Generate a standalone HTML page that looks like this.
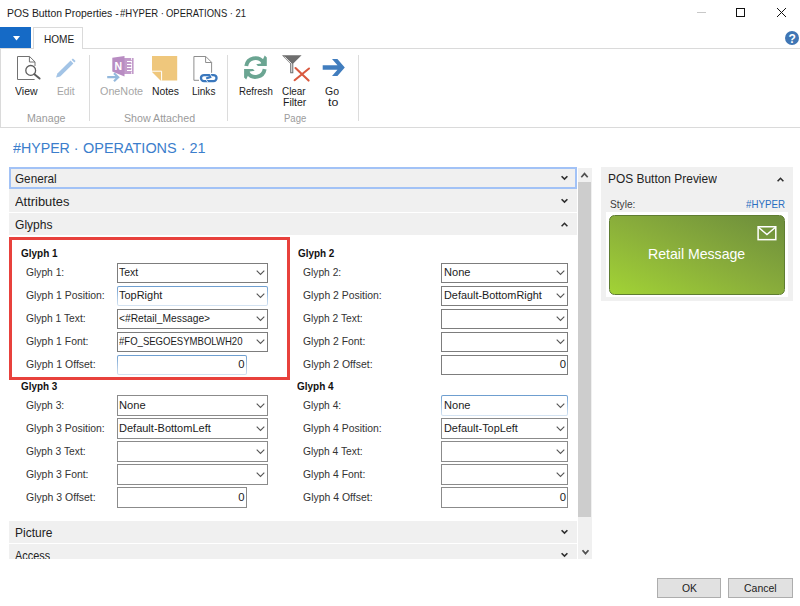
<!DOCTYPE html>
<html><head><meta charset="utf-8"><title>POS Button Properties</title>
<style>
html,body{margin:0;padding:0;background:#fff;}
body{width:800px;height:606px;position:relative;overflow:hidden;font-family:"Liberation Sans",sans-serif;font-size:11.3px;color:#000;}
.a{position:absolute;}
.t{position:absolute;white-space:nowrap;line-height:16px;height:16px;transform-origin:0 0;}
.in{position:absolute;box-sizing:border-box;border:1px solid #7d7d7d;background:#fff;height:20px;}
.in.f{border-color:transparent;border-radius:2px;background:linear-gradient(#fff,#fff) padding-box,linear-gradient(to bottom,#6c9dcf 0%,#9fbfe0 45%,#d6e4f2 100%) border-box;}
.in svg{position:absolute;right:2.5px;top:6px;}
.ft{position:absolute;left:9px;width:568px;background:#f0f0f0;}
.sep{position:absolute;width:1px;background:#dcdcdc;top:55px;height:66px;}
.btn{position:absolute;box-sizing:border-box;border:1px solid #adadad;background:#e1e1e1;height:20px;}
</style></head><body>

<!-- window controls -->
<div class="a" style="left:697px;top:12px;width:9px;height:1px;background:#c8c8c8"></div>
<div class="a" style="left:736px;top:8px;width:9px;height:9px;box-sizing:border-box;border:1px solid #111"></div>
<svg class="a" style="left:776px;top:7px" width="11" height="11" viewBox="0 0 11 11"><path d="M1 1 L10 10 M10 1 L1 10" stroke="#111" stroke-width="1" fill="none"/></svg>
<!-- tab row -->
<div class="a" style="left:0;top:48px;width:800px;height:1px;background:#dadada"></div>
<div class="a" style="left:0;top:27px;width:31px;height:21px;background:#156ac6"></div>
<svg class="a" style="left:13px;top:36px" width="7" height="5" viewBox="0 0 7 5"><path d="M0 0 L7 0 L3.5 4.4 Z" fill="#fff"/></svg>
<div class="a" style="left:33px;top:27px;width:50px;height:22px;box-sizing:border-box;border:1px solid #dadada;border-bottom:none;background:#fff"></div>
<!-- help -->
<div class="a" style="left:785px;top:31px;width:14px;height:14px;border-radius:7px;background:#3f76b5"></div>
<div class="t" style="left:788.6px;top:30.5px;font-size:12px;font-weight:700;color:#fff">?</div>
<!-- ribbon frame -->
<div class="a" style="left:0;top:127px;width:800px;height:1px;background:#dadada"></div>
<div class="a" style="left:0;top:49px;width:1px;height:78px;background:#dadada"></div>
<div class="sep" style="left:89px"></div>
<div class="sep" style="left:227px"></div>
<div class="sep" style="left:358px"></div>
<!-- icons -->
<!-- View -->
<svg class="a" style="left:16px;top:55px" width="26" height="26" viewBox="0 0 26 26">
<path d="M19 11 V6.9 L13.6 1.5 H1.5 V24.5 H18.6" fill="none" stroke="#727272" stroke-width="1"/>
<path d="M13.4 1.5 V7 H19" fill="none" stroke="#727272" stroke-width="1"/>
<circle cx="14.7" cy="15.4" r="4.9" fill="#fff" stroke="#5c5c5c" stroke-width="1.3"/>
<path d="M18.4 19.2 L23.6 23.6" stroke="#5c5c5c" stroke-width="1.9" fill="none" stroke-linecap="round"/>
</svg>
<!-- Edit -->
<svg class="a" style="left:54px;top:56px" width="24" height="24" viewBox="0 0 24 24">
<path d="M2 21.5 L3.4 17.6 L16.6 4.6 L19.4 7.4 L6.2 20.4 Z" fill="#a3c4e6"/>
<path d="M17.6 3.7 L18.9 2.4 L21.6 5.1 L20.3 6.4 Z" fill="#a3c4e6"/>
</svg>
<!-- OneNote -->
<svg class="a" style="left:105px;top:54px" width="32" height="30" viewBox="0 0 32 30">
<rect x="19" y="4" width="9.6" height="16" fill="#c39ccb"/>
<path d="M22 7.5 H27 M22 10.5 H27 M22 13.5 H27 M22 16.5 H27" stroke="#fff" stroke-width="1.1"/>
<path d="M26.5 4 V20" stroke="#fff" stroke-width="0.8" stroke-dasharray="2.2 1.2"/>
<path d="M7.3 3.8 L19.5 1.9 V22.6 L7.3 17.5 Z" fill="#b88cc2"/>
<text x="13.2" y="15.6" font-family="Liberation Sans, sans-serif" font-size="10.5" font-weight="700" fill="#fff" text-anchor="middle">N</text>
<path d="M2.2 23.2 H12.5 M9 19.2 L13.2 23.2 L9 27.2" fill="none" stroke="#94b9dd" stroke-width="2.2"/>
</svg>
<!-- Notes -->
<svg class="a" style="left:152px;top:55px" width="26" height="27" viewBox="0 0 26 27">
<path d="M0 1 H25.2 V25.6 H8.5 L0 17 Z" fill="#efc77c"/>
<path d="M0 16.2 H9.6 V25.6" fill="none" stroke="#fff" stroke-width="1"/>
</svg>
<!-- Links -->
<svg class="a" style="left:192px;top:54px" width="28" height="30" viewBox="0 0 28 30">
<path d="M19.6 18.8 V8.3 L13.8 2.5 H1.9 V26.3 H7" fill="none" stroke="#8e8e8e" stroke-width="1"/>
<path d="M13.6 2.5 V8.5 H19.6" fill="none" stroke="#8e8e8e" stroke-width="1"/>
<rect x="8.95" y="21.05" width="15.6" height="6" rx="3" fill="#fff" stroke="#3b78bd" stroke-width="2.3"/>
<path d="M14.2 24.5 L19.3 22.6" stroke="#3b78bd" stroke-width="2.2" fill="none"/>
<path d="M18 19.9 L20.2 23.2 M14.1 25.8 L16 28.4" stroke="#fff" stroke-width="0.8" fill="none"/>
</svg>
<!-- Refresh -->
<svg class="a" style="left:240px;top:52px" width="32" height="32" viewBox="-15.45 -15.55 32 32">
<g fill="#6ba592"><path d="M-9.22 -1.55 A9.35 9.35 0 0 1 7.66 -5.36" fill="none" stroke="#6ba592" stroke-width="3.9"/>
<path d="M9.25 -11.95 L11.35 -10 V-1.55 H2.5 L0.75 -3.25 L5.55 -3.95 Z"/></g>
<g fill="#6ba592" transform="rotate(180)"><path d="M-9.22 -1.55 A9.35 9.35 0 0 1 7.66 -5.36" fill="none" stroke="#6ba592" stroke-width="3.9"/>
<path d="M9.25 -11.95 L11.35 -10 V-1.55 H2.5 L0.75 -3.25 L5.55 -3.95 Z"/></g>
</svg>
<!-- Clear filter -->
<svg class="a" style="left:281px;top:54px" width="30" height="29" viewBox="0 0 30 29">
<path d="M1 1.2 H20.6 L12.3 9.4 V19.2 H9.2 V9.4 Z" fill="#6e6e6e"/>
<path d="M3.6 2.8 L10.75 9.8 V18.3" fill="none" stroke="#fff" stroke-width="0.9"/>
<path d="M14.5 14 L27.6 26.6 M28 14.5 L13.6 26.2" stroke="#d9593f" stroke-width="2.1" fill="none" stroke-linecap="round"/>
</svg>
<!-- Go to -->
<svg class="a" style="left:320px;top:56px" width="28" height="24" viewBox="320 56 28 24">
<path d="M322.7 65.3 H337.5 L332 59 H337.4 L344.8 67.55 L337.4 76.1 H332 L337.5 69.8 H322.7 Z" fill="#417dbe"/>
</svg>
<!-- fasttabs -->
<div class="ft" style="top:167px;height:22px;box-sizing:border-box;border:2px solid #a2c2f6"></div>
<div class="ft" style="top:189px;height:23px"></div>
<div class="ft" style="top:213px;height:22px"></div>
<div class="ft" style="top:521px;height:22px"></div>
<div class="ft" style="top:544px;height:15px"></div>
<svg class="a" style="left:560px;top:174px" width="9" height="8" viewBox="0 0 9 8"><path d="M1.6 2.2 L4.5 5.1 L7.4 2.2" fill="none" stroke="#2e2e2e" stroke-width="1.6"/></svg>
<svg class="a" style="left:560px;top:197px" width="9" height="8" viewBox="0 0 9 8"><path d="M1.6 2.2 L4.5 5.1 L7.4 2.2" fill="none" stroke="#2e2e2e" stroke-width="1.6"/></svg>
<svg class="a" style="left:560px;top:220px" width="9" height="8" viewBox="0 0 9 8"><path d="M1.6 6.2 L4.5 3.3 L7.4 6.2" fill="none" stroke="#2e2e2e" stroke-width="1.6"/></svg>
<svg class="a" style="left:560px;top:528px" width="9" height="8" viewBox="0 0 9 8"><path d="M1.6 2.2 L4.5 5.1 L7.4 2.2" fill="none" stroke="#2e2e2e" stroke-width="1.6"/></svg>
<svg class="a" style="left:560px;top:551px" width="9" height="8" viewBox="0 0 9 8"><path d="M1.6 2.2 L4.5 5.1 L7.4 2.2" fill="none" stroke="#2e2e2e" stroke-width="1.6"/></svg>
<!-- scrollbar -->
<div class="a" style="left:578px;top:168px;width:14px;height:391px;background:#f0f0f0"></div>
<div class="a" style="left:578px;top:182px;width:13px;height:335px;background:#cdcdcd"></div>
<svg class="a" style="left:580px;top:171px" width="9" height="8" viewBox="0 0 9 8"><path d="M1.3 6.3 L4.5 2.6 L7.7 6.3" fill="none" stroke="#505050" stroke-width="1.7"/></svg>
<svg class="a" style="left:580.5px;top:547.5px" width="9" height="8" viewBox="0 0 9 8"><path d="M1.5 2.2 L4.5 5.6 L7.5 2.2" fill="none" stroke="#505050" stroke-width="1.7"/></svg>
<!-- red box -->
<div class="a" style="left:9px;top:237px;width:281px;height:143px;box-sizing:border-box;border:3px solid #e8413c"></div>
<!-- right panel -->
<div class="a" style="left:601px;top:167px;width:192px;height:134px;background:#f0f0f0"></div>
<svg class="a" style="left:776px;top:175px" width="9" height="8" viewBox="0 0 9 8"><path d="M1.6 6.2 L4.5 3.3 L7.4 6.2" fill="none" stroke="#2e2e2e" stroke-width="1.6"/></svg>
<div class="a" style="left:606px;top:212px;width:182px;height:85px;background:#fff"></div>
<div class="a" style="left:609px;top:215px;width:176px;height:80px;box-sizing:border-box;border:1px solid #5f7d31;border-radius:5.5px;background:linear-gradient(to top right,#a2d335 0%,#89ad3b 50%,#6c8c3c 100%)"></div>
<svg class="a" style="left:756px;top:225px" width="22" height="17" viewBox="0 0 22 17"><rect x="2.1" y="1.75" width="17.7" height="12.9" fill="none" stroke="#fff" stroke-width="1.5"/><path d="M2.4 2.3 L10.95 9.6 L19.5 2.3" fill="none" stroke="#fff" stroke-width="1.5"/></svg>
<!-- buttons -->
<div class="btn" style="left:657px;top:578px;width:64px"></div>
<div class="btn" style="left:728px;top:578px;width:65px"></div>

<div class="in" style="left:117px;top:263px;width:151px"><svg width="9" height="6" viewBox="0 0 9 6"><path d="M0.7 0.7 L4.5 4.5 L8.3 0.7" fill="none" stroke="#565656" stroke-width="1.1"/></svg></div>
<div class="in f" style="left:117px;top:286px;width:151px"><svg width="9" height="6" viewBox="0 0 9 6"><path d="M0.7 0.7 L4.5 4.5 L8.3 0.7" fill="none" stroke="#565656" stroke-width="1.1"/></svg></div>
<div class="in" style="left:117px;top:309px;width:151px"><svg width="9" height="6" viewBox="0 0 9 6"><path d="M0.7 0.7 L4.5 4.5 L8.3 0.7" fill="none" stroke="#565656" stroke-width="1.1"/></svg></div>
<div class="in" style="left:117px;top:332px;width:151px"><svg width="9" height="6" viewBox="0 0 9 6"><path d="M0.7 0.7 L4.5 4.5 L8.3 0.7" fill="none" stroke="#565656" stroke-width="1.1"/></svg></div>
<div class="in f" style="left:117px;top:355px;width:130px"></div>
<div class="in" style="left:117px;top:395px;width:151px;height:21px;border-color:#8b8b8b"><svg style="top:7px" width="9" height="6" viewBox="0 0 9 6"><path d="M0.7 0.7 L4.5 4.5 L8.3 0.7" fill="none" stroke="#565656" stroke-width="1.1"/></svg></div>
<div class="in" style="left:117px;top:418px;width:151px;height:21px;border-color:#8b8b8b"><svg style="top:7px" width="9" height="6" viewBox="0 0 9 6"><path d="M0.7 0.7 L4.5 4.5 L8.3 0.7" fill="none" stroke="#565656" stroke-width="1.1"/></svg></div>
<div class="in" style="left:117px;top:441px;width:151px;height:21px;border-color:#8b8b8b"><svg style="top:7px" width="9" height="6" viewBox="0 0 9 6"><path d="M0.7 0.7 L4.5 4.5 L8.3 0.7" fill="none" stroke="#565656" stroke-width="1.1"/></svg></div>
<div class="in" style="left:117px;top:464px;width:151px;height:21px;border-color:#8b8b8b"><svg style="top:7px" width="9" height="6" viewBox="0 0 9 6"><path d="M0.7 0.7 L4.5 4.5 L8.3 0.7" fill="none" stroke="#565656" stroke-width="1.1"/></svg></div>
<div class="in" style="left:117px;top:487px;width:130px;height:21px;border-color:#8b8b8b"></div>
<div class="in" style="left:441px;top:263px;width:127px"><svg width="9" height="6" viewBox="0 0 9 6"><path d="M0.7 0.7 L4.5 4.5 L8.3 0.7" fill="none" stroke="#565656" stroke-width="1.1"/></svg></div>
<div class="in" style="left:441px;top:286px;width:127px"><svg width="9" height="6" viewBox="0 0 9 6"><path d="M0.7 0.7 L4.5 4.5 L8.3 0.7" fill="none" stroke="#565656" stroke-width="1.1"/></svg></div>
<div class="in" style="left:441px;top:309px;width:127px"><svg width="9" height="6" viewBox="0 0 9 6"><path d="M0.7 0.7 L4.5 4.5 L8.3 0.7" fill="none" stroke="#565656" stroke-width="1.1"/></svg></div>
<div class="in" style="left:441px;top:332px;width:127px"><svg width="9" height="6" viewBox="0 0 9 6"><path d="M0.7 0.7 L4.5 4.5 L8.3 0.7" fill="none" stroke="#565656" stroke-width="1.1"/></svg></div>
<div class="in" style="left:441px;top:355px;width:127px"></div>
<div class="in f" style="left:441px;top:395px;width:127px;height:21px"><svg style="top:7px" width="9" height="6" viewBox="0 0 9 6"><path d="M0.7 0.7 L4.5 4.5 L8.3 0.7" fill="none" stroke="#565656" stroke-width="1.1"/></svg></div>
<div class="in" style="left:441px;top:418px;width:127px;height:21px;border-color:#8b8b8b"><svg style="top:7px" width="9" height="6" viewBox="0 0 9 6"><path d="M0.7 0.7 L4.5 4.5 L8.3 0.7" fill="none" stroke="#565656" stroke-width="1.1"/></svg></div>
<div class="in" style="left:441px;top:441px;width:127px;height:21px;border-color:#8b8b8b"><svg style="top:7px" width="9" height="6" viewBox="0 0 9 6"><path d="M0.7 0.7 L4.5 4.5 L8.3 0.7" fill="none" stroke="#565656" stroke-width="1.1"/></svg></div>
<div class="in" style="left:441px;top:464px;width:127px;height:21px;border-color:#8b8b8b"><svg style="top:7px" width="9" height="6" viewBox="0 0 9 6"><path d="M0.7 0.7 L4.5 4.5 L8.3 0.7" fill="none" stroke="#565656" stroke-width="1.1"/></svg></div>
<div class="in" style="left:441px;top:487px;width:127px;height:21px;border-color:#8b8b8b"></div>
<div class="t" id="t0" style="left:7.23px;top:5.20px;color:#1c1c1c;transform:scaleX(0.9216);">POS Button Properties -</div>
<div class="t" id="t1" style="left:120.28px;top:5.20px;color:#1c1c1c;transform:scaleX(0.8443);">#HYPER ·</div>
<div class="t" id="t2" style="left:166.05px;top:5.20px;color:#1c1c1c;transform:scaleX(0.8354);">OPERATIONS · 21</div>
<div class="t" id="t3" style="left:43.55px;top:31.10px;font-size:11px;color:#222;transform:scaleX(0.9158);">HOME</div>
<div class="t" id="t4" style="left:15.48px;top:82.90px;color:#1c1c1c;transform:scaleX(0.9289);">View</div>
<div class="t" id="t5" style="left:56.69px;top:82.90px;color:#a6a6a6;transform:scaleX(0.9103);">Edit</div>
<div class="t" id="t6" style="left:99.82px;top:82.90px;color:#a6a6a6;transform:scaleX(0.9535);">OneNote</div>
<div class="t" id="t7" style="left:151.76px;top:82.90px;color:#1c1c1c;transform:scaleX(0.9158);">Notes</div>
<div class="t" id="t8" style="left:192.17px;top:82.90px;color:#1c1c1c;transform:scaleX(0.8870);">Links</div>
<div class="t" id="t9" style="left:238.96px;top:82.90px;color:#1c1c1c;transform:scaleX(0.8552);">Refresh</div>
<div class="t" id="t10" style="left:281.62px;top:83.10px;color:#1c1c1c;transform:scaleX(0.8763);">Clear</div>
<div class="t" id="t11" style="left:282.58px;top:94.30px;color:#1c1c1c;transform:scaleX(0.9297);">Filter</div>
<div class="t" id="t12" style="left:324.99px;top:83.10px;color:#1c1c1c;transform:scaleX(0.9286);">Go</div>
<div class="t" id="t13" style="left:327.63px;top:94.30px;color:#1c1c1c;transform:scaleX(1.0925);">to</div>
<div class="t" id="t14" style="left:27.00px;top:110.00px;color:#9b9b9b;transform:scaleX(0.9425);">Manage</div>
<div class="t" id="t15" style="left:124.22px;top:110.00px;color:#9b9b9b;transform:scaleX(0.9432);">Show Attached</div>
<div class="t" id="t16" style="left:283.60px;top:110.00px;color:#9b9b9b;transform:scaleX(0.8414);">Page</div>
<div class="t" id="t17" style="left:12.85px;top:140.00px;font-size:15.4px;color:#3b7ecc;transform:scaleX(0.9238);">#HYPER ·</div>
<div class="t" id="t18" style="left:82.76px;top:140.00px;font-size:15.4px;color:#3b7ecc;transform:scaleX(0.9392);">OPERATIONS · 21</div>
<div class="t" id="t19" style="left:14.99px;top:170.50px;font-size:12.4px;color:#222;transform:scaleX(0.9455);">General</div>
<div class="t" id="t20" style="left:15.10px;top:193.70px;font-size:12.4px;color:#222;transform:scaleX(1.0387);">Attributes</div>
<div class="t" id="t21" style="left:14.71px;top:216.50px;font-size:12.4px;color:#222;transform:scaleX(0.9729);">Glyphs</div>
<div class="t" id="t22" style="left:15.00px;top:524.60px;font-size:12.4px;color:#222;transform:scaleX(0.9685);">Picture</div>
<div class="t" id="t23" style="left:20.81px;top:244.90px;font-size:11.7px;font-weight:700;color:#111;transform:scaleX(0.8528);">Glyph 1</div>
<div class="t" id="t24" style="left:26.00px;top:264.30px;color:#333;transform:scaleX(0.9085);">Glyph 1:</div>
<div class="t" id="t25" style="left:26.06px;top:287.30px;color:#333;transform:scaleX(0.9215);">Glyph 1 Position:</div>
<div class="t" id="t26" style="left:26.21px;top:310.30px;color:#333;transform:scaleX(0.9072);">Glyph 1 Text:</div>
<div class="t" id="t27" style="left:26.28px;top:333.30px;color:#333;transform:scaleX(0.9216);">Glyph 1 Font:</div>
<div class="t" id="t28" style="left:25.65px;top:356.30px;color:#333;transform:scaleX(0.9274);">Glyph 1 Offset:</div>
<div class="t" id="t29" style="left:20.97px;top:377.60px;font-size:11.7px;font-weight:700;color:#111;transform:scaleX(0.8461);">Glyph 3</div>
<div class="t" id="t30" style="left:26.00px;top:397.20px;color:#333;transform:scaleX(0.9085);">Glyph 3:</div>
<div class="t" id="t31" style="left:26.06px;top:420.20px;color:#333;transform:scaleX(0.9215);">Glyph 3 Position:</div>
<div class="t" id="t32" style="left:26.21px;top:443.20px;color:#333;transform:scaleX(0.9072);">Glyph 3 Text:</div>
<div class="t" id="t33" style="left:26.28px;top:466.20px;color:#333;transform:scaleX(0.9216);">Glyph 3 Font:</div>
<div class="t" id="t34" style="left:25.65px;top:489.20px;color:#333;transform:scaleX(0.9274);">Glyph 3 Offset:</div>
<div class="t" id="t35" style="left:297.55px;top:244.90px;font-size:11.7px;font-weight:700;color:#111;transform:scaleX(0.8486);">Glyph 2</div>
<div class="t" id="t36" style="left:302.54px;top:264.30px;color:#333;transform:scaleX(0.9079);">Glyph 2:</div>
<div class="t" id="t37" style="left:302.54px;top:287.30px;color:#333;transform:scaleX(0.9219);">Glyph 2 Position:</div>
<div class="t" id="t38" style="left:302.51px;top:310.30px;color:#333;transform:scaleX(0.9073);">Glyph 2 Text:</div>
<div class="t" id="t39" style="left:302.54px;top:333.30px;color:#333;transform:scaleX(0.9184);">Glyph 2 Font:</div>
<div class="t" id="t40" style="left:302.54px;top:356.30px;color:#333;transform:scaleX(0.9260);">Glyph 2 Offset:</div>
<div class="t" id="t41" style="left:297.40px;top:377.60px;font-size:11.7px;font-weight:700;color:#111;transform:scaleX(0.8521);">Glyph 4</div>
<div class="t" id="t42" style="left:302.54px;top:397.20px;color:#333;transform:scaleX(0.9079);">Glyph 4:</div>
<div class="t" id="t43" style="left:302.54px;top:420.20px;color:#333;transform:scaleX(0.9219);">Glyph 4 Position:</div>
<div class="t" id="t44" style="left:302.51px;top:443.20px;color:#333;transform:scaleX(0.9073);">Glyph 4 Text:</div>
<div class="t" id="t45" style="left:302.54px;top:466.20px;color:#333;transform:scaleX(0.9184);">Glyph 4 Font:</div>
<div class="t" id="t46" style="left:302.54px;top:489.20px;color:#333;transform:scaleX(0.9260);">Glyph 4 Offset:</div>
<div class="t" id="t47" style="left:608.49px;top:170.90px;font-size:12.4px;color:#222;transform:scaleX(0.9629);">POS Button Preview</div>
<div class="t" id="t48" style="left:609.87px;top:195.80px;color:#3c3c3c;transform:scaleX(0.8963);">Style:</div>
<div class="t" id="t49" style="left:745.65px;top:195.80px;color:#2a6fc0;transform:scaleX(0.8608);">#HYPER</div>
<div class="t" id="t50" style="left:647.85px;top:246.10px;font-size:15px;color:#fff;transform:scaleX(0.9401);">Retail Message</div>
<div class="t" id="t51" style="left:681.92px;top:579.80px;color:#1c1c1c;transform:scaleX(0.9192);">OK</div>
<div class="t" id="t52" style="left:743.74px;top:579.80px;color:#1c1c1c;transform:scaleX(0.9284);">Cancel</div>
<div class="t" id="t53" style="left:119.12px;top:264.00px;color:#1c1c1c;transform:scaleX(0.9285);">Text</div>
<div class="t" id="t54" style="left:119.11px;top:287.00px;color:#1c1c1c;transform:scaleX(0.9715);">TopRight</div>
<div class="t" id="t55" style="left:118.60px;top:310.00px;color:#1c1c1c;transform:scaleX(0.9063);">&lt;#Retail_Message&gt;</div>
<div class="t" id="t56" style="left:119.05px;top:333.00px;color:#1c1c1c;transform:scaleX(0.8451);">#FO_SEGOESYMBOLWH20</div>
<div class="t" id="t57" style="left:238.30px;top:356.30px;color:#1c1c1c;">0</div>
<div class="t" id="t58" style="left:119.34px;top:396.90px;color:#1c1c1c;transform:scaleX(0.9861);">None</div>
<div class="t" id="t59" style="left:119.34px;top:419.90px;color:#1c1c1c;transform:scaleX(0.9744);">Default-BottomLeft</div>
<div class="t" id="t60" style="left:238.30px;top:489.30px;color:#1c1c1c;">0</div>
<div class="t" id="t61" style="left:443.71px;top:264.00px;color:#1c1c1c;transform:scaleX(0.9800);">None</div>
<div class="t" id="t62" style="left:443.68px;top:287.00px;color:#1c1c1c;transform:scaleX(0.9611);">Default-BottomRight</div>
<div class="t" id="t63" style="left:559.71px;top:356.30px;color:#1c1c1c;">0</div>
<div class="t" id="t64" style="left:443.71px;top:396.90px;color:#1c1c1c;transform:scaleX(0.9800);">None</div>
<div class="t" id="t65" style="left:443.68px;top:419.90px;color:#1c1c1c;transform:scaleX(0.9640);">Default-TopLeft</div>
<div class="t" id="t66" style="left:559.71px;top:489.30px;color:#1c1c1c;">0</div>
<div class="t" id="t67" style="left:15.14px;top:547.60px;font-size:12.4px;color:#222;transform:scaleX(0.8786);height:11.40px;overflow:hidden;">Access</div>
</body></html>
